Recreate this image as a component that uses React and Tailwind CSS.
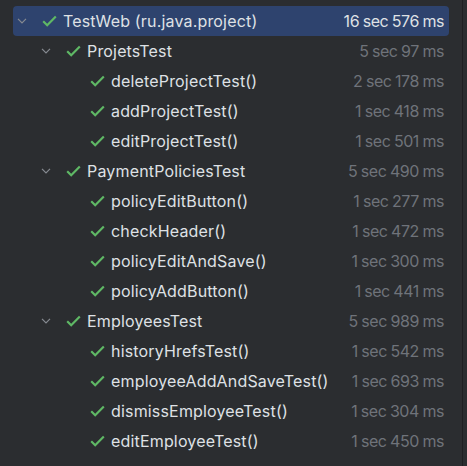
const rows = [
  { level: 0, name: 'TestWeb (ru.java.project)', time: '16 sec 576 ms', group: true, selected: true },
  { level: 1, name: 'ProjetsTest', time: '5 sec 97 ms', group: true },
  { level: 2, name: 'deleteProjectTest()', time: '2 sec 178 ms' },
  { level: 2, name: 'addProjectTest()', time: '1 sec 418 ms' },
  { level: 2, name: 'editProjectTest()', time: '1 sec 501 ms' },
  { level: 1, name: 'PaymentPoliciesTest', time: '5 sec 490 ms', group: true },
  { level: 2, name: 'policyEditButton()', time: '1 sec 277 ms' },
  { level: 2, name: 'checkHeader()', time: '1 sec 472 ms' },
  { level: 2, name: 'policyEditAndSave()', time: '1 sec 300 ms' },
  { level: 2, name: 'policyAddButton()', time: '1 sec 441 ms' },
  { level: 1, name: 'EmployeesTest', time: '5 sec 989 ms', group: true },
  { level: 2, name: 'historyHrefsTest()', time: '1 sec 542 ms' },
  { level: 2, name: 'employeeAddAndSaveTest()', time: '1 sec 693 ms' },
  { level: 2, name: 'dismissEmployeeTest()', time: '1 sec 304 ms' },
  { level: 2, name: 'editEmployeeTest()', time: '1 sec 450 ms' },
]

const Chevron = () => (
  <svg width="10" height="6" viewBox="0 0 10 6" fill="none">
    <path d="M1 0.8 L5 4.8 L9 0.8" stroke="#868a91" strokeWidth="1.2" />
  </svg>
)

const Check = () => (
  <svg width="15" height="12" viewBox="0 0 15 12" fill="none">
    <path d="M1.2 6.2 L5.2 10.2 L13.8 1.4" stroke="#5fb865" strokeWidth="2.2" />
  </svg>
)

const indent = ['pl-[4px]', 'pl-[28px]', 'pl-[52px]']

const Row = ({ row }) => (
  <div
    className={`flex h-[30px] items-center rounded-[4px] pr-[5px] ${indent[row.level]} ${
      row.selected ? 'bg-[#2e436e]' : ''
    }`}
  >
    <div className="flex w-[25px] shrink-0 items-center">{row.group && <Chevron />}</div>
    <div className="flex w-[21px] shrink-0 items-center">
      <Check />
    </div>
    <span className="text-[16px] tracking-[0.17px] text-[#dfe1e5]">{row.name}</span>
    <span
      className={`ml-auto text-[16px] tracking-[-0.45px] [word-spacing:-0.5px] ${
        row.selected ? 'text-[#dfe1e5]' : 'text-[#6f737a]'
      }`}
    >
      {row.time}
    </span>
  </div>
)

export default function App() {
  return (
    <div
      className="flex h-[466px] w-[467px] bg-[#2b2d30]"
      style={{ fontFamily: 'Inter, "Noto Sans", sans-serif' }}
    >
      <div className="flex-1 pl-[13px] pr-[13px] pt-[6px]">
        {rows.map((r) => (
          <Row key={r.name} row={r} />
        ))}
      </div>
      <div className="w-[5px] border-l border-[#1e1f22] bg-[#2b2d30]" />
    </div>
  )
}
